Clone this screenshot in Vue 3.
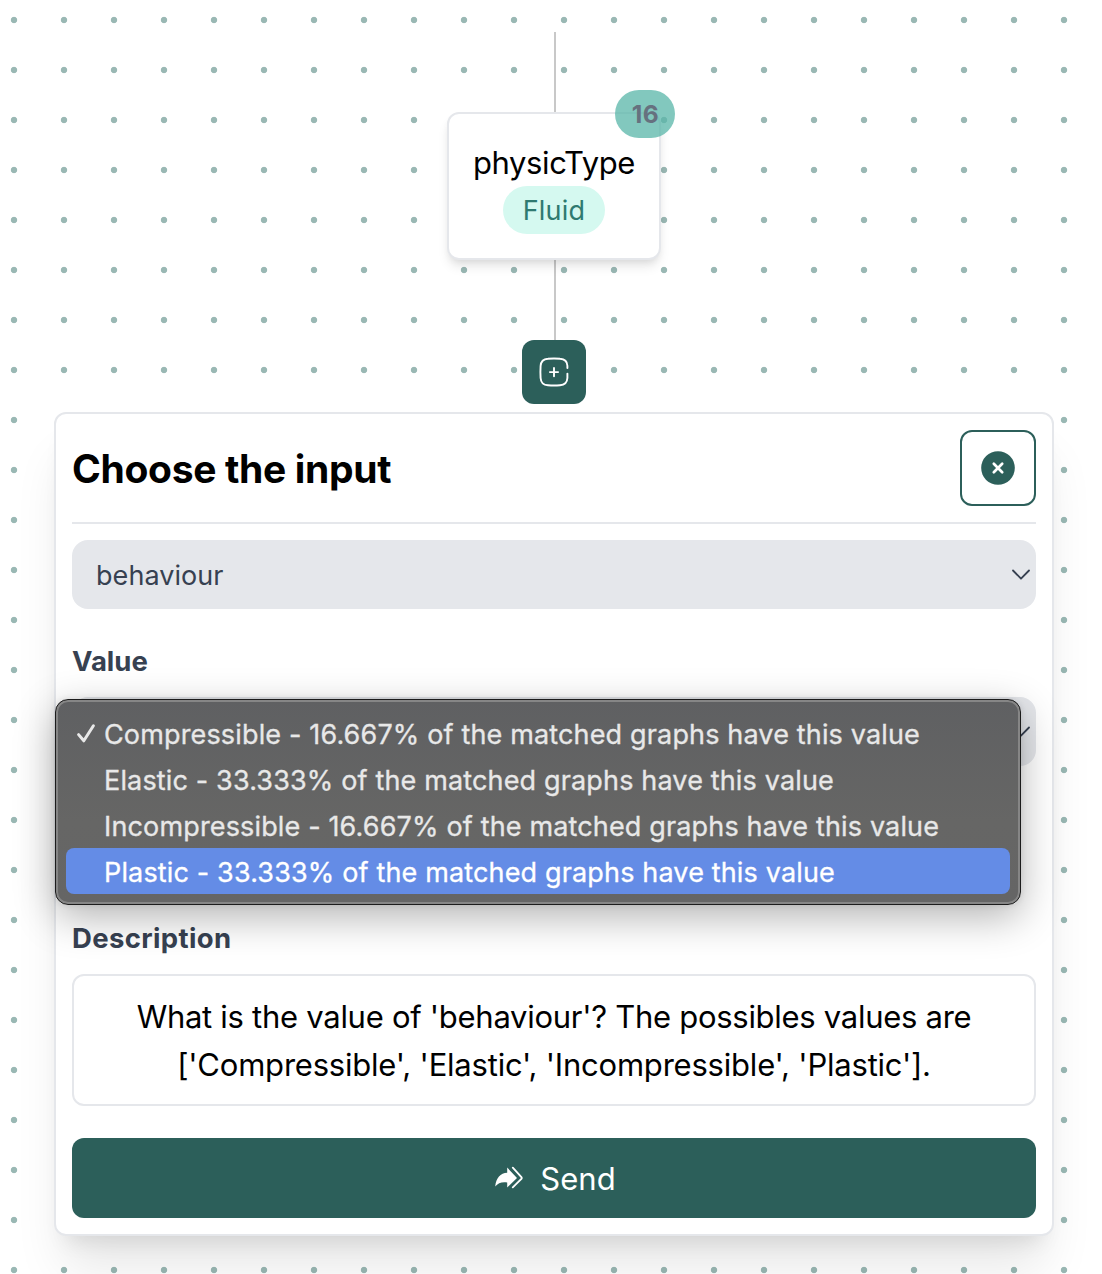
<script setup>
const options = [
  { text: 'Compressible - 16.667% of the matched graphs have this value', checked: true },
  { text: 'Elastic - 33.333% of the matched graphs have this value' },
  { text: 'Incompressible - 16.667% of the matched graphs have this value' },
  { text: 'Plastic - 33.333% of the matched graphs have this value', active: true },
]
</script>

<template>
  <main class="canvas">
    <div class="edge"></div>
    <div class="node">
      <span class="badge">16</span>
      <div class="node-title">physicType</div>
      <span class="pill">Fluid</span>
    </div>
    <div class="edge"></div>
    <button class="add" aria-label="Add">
      <svg width="32" height="32" viewBox="0 0 32 32" fill="none" stroke="#fff" stroke-width="1.9" stroke-linecap="round">
        <path d="M29.4 12V9.8C29.2 5 26.6 2.9 22 2.7Q16 2.2 10 2.7C5 3 2.9 5 2.6 10Q2.2 16 2.6 22C2.9 27 5 29 10 29.3Q16 29.8 22 29.3C27 29 29.1 27 29.4 22V17.6" />
        <path d="M16 12V20.2M11.9 16.1H20.1" />
      </svg>
    </button>

    <section class="panel">
      <header class="head">
        <h1>Choose the input</h1>
        <button class="close" aria-label="Close">
          <svg width="34" height="34" viewBox="0 0 34 34">
            <circle cx="17" cy="17" r="16.8" fill="#2c5f5a" />
            <path d="M12.8 12.8L21.2 21.2M21.2 12.8L12.8 21.2" stroke="#fff" stroke-width="2.7" stroke-linecap="round" />
          </svg>
        </button>
      </header>

      <div class="select">
        <span>behaviour</span>
        <svg class="chevron" width="18" height="12" viewBox="0 0 18 12"><path d="M1 1.5L9 9.7L17 1.5" /></svg>
      </div>

      <div class="label value-label">Value</div>
      <div class="select-wrap">
        <div class="select">
          <span></span>
          <svg class="chevron" width="18" height="12" viewBox="0 0 18 12"><path d="M1 1.5L9 9.7L17 1.5" /></svg>
        </div>
        <ul class="menu">
          <li v-for="o in options" :key="o.text" :class="{ active: o.active }">
            <svg v-if="o.checked" class="check" width="20" height="22" viewBox="0 0 20 22"><path d="M2.6 11.6L7.8 17.8L17.4 2.8" /></svg>
            <span>{{ o.text }}</span>
          </li>
        </ul>
      </div>

      <div class="label desc-label">Description</div>
      <div class="desc">
        <div class="line1">What is the value of 'behaviour'? The possibles values are</div>
        <div class="line2">['Compressible', 'Elastic', 'Incompressible', 'Plastic'].</div>
      </div>

      <button class="send">
        <svg width="28" height="24" viewBox="0 0 28 24">
          <path d="M0.2 20.6C1 12 5.5 7.2 12.2 6.8V1.6L22 12L12.2 21.6V16.4C7 15.6 3 16.8 0.2 20.6Z" fill="#fff" />
          <path d="M17.8 1.6L26.6 11.4Q27 12 26.6 12.6L17.8 21.4" fill="none" stroke="#fff" stroke-width="1.8" stroke-linecap="round" />
        </svg>
        <span>Send</span>
      </button>
    </section>
  </main>
</template>

<style>
body {
  margin: 0;
  overflow: hidden;
}
</style>

<style scoped>
* {
  box-sizing: border-box;
}
.canvas {
  display: flex;
  flex-direction: column;
  align-items: center;
  width: 1108px;
  height: 1274px;
  padding-top: 32px;
  overflow: hidden;
  font-family: Inter, "Liberation Sans", sans-serif;
  color: #000;
  background: #fff radial-gradient(circle at 25px 25px, #9ab8b4 2.8px, transparent 3.6px) -11px -5px / 50px 50px;
}
button {
  font-family: inherit;
  padding: 0;
  border: 0;
}
.edge {
  flex: none;
  width: 2px;
  height: 80px;
  margin-left: 2px;
  background: #c8c8c8;
}
.node {
  position: relative;
  flex: none;
  display: flex;
  flex-direction: column;
  align-items: center;
  width: 214px;
  height: 148px;
  padding-top: 24px;
  background: #fff;
  border: 2px solid #e5e7eb;
  border-radius: 12px;
  box-shadow: 0 8px 12px -2px rgba(0, 0, 0, 0.1), 0 4px 8px -4px rgba(0, 0, 0, 0.1);
}
.node-title {
  height: 48px;
  font-size: 31px;
  line-height: 50px;
  letter-spacing: -0.4px;
}
.pill {
  width: 102px;
  height: 48px;
  line-height: 50px;
  border-radius: 24px;
  text-align: center;
  font-size: 27px;
  letter-spacing: 0.2px;
  color: #2f7a70;
  background: #d5f9f0;
}
.badge {
  position: absolute;
  top: -24px;
  right: -16px;
  width: 60px;
  height: 48px;
  line-height: 49px;
  border-radius: 24px;
  text-align: center;
  font-size: 24.5px;
  font-weight: 700;
  letter-spacing: 0.6px;
  text-indent: 1px;
  color: #66717f;
  background: rgba(88, 182, 168, 0.75);
}
.add {
  flex: none;
  display: flex;
  align-items: center;
  justify-content: center;
  width: 64px;
  height: 64px;
  border-radius: 12px;
  background: #2c5f5a;
}
.panel {
  flex: none;
  width: 1000px;
  height: 824px;
  margin-top: 8px;
  padding: 16px;
  background: #fff;
  border: 2px solid #e5e7eb;
  border-radius: 12px;
  box-shadow: 0 40px 50px -10px rgba(0, 0, 0, 0.1), 0 16px 20px -12px rgba(0, 0, 0, 0.1);
}
.head {
  display: flex;
  align-items: center;
  justify-content: space-between;
  height: 94px;
  padding-bottom: 16px;
  border-bottom: 2px solid #e5e7eb;
}
h1 {
  margin: 0;
  font-size: 39px;
  font-weight: 700;
  letter-spacing: -0.33px;
}
.close {
  display: flex;
  align-items: center;
  justify-content: center;
  width: 76px;
  height: 76px;
  background: #fff;
  border: 2px solid #2c5f5a;
  border-radius: 12px;
}
.select {
  display: flex;
  align-items: center;
  justify-content: space-between;
  height: 69px;
  padding: 0 6px 0 24px;
  border-radius: 16px;
  font-size: 27px;
  letter-spacing: 0.06px;
  color: #374151;
  background: #e5e7eb;
}
.select span {
  padding-top: 2px;
}
.head + .select {
  margin-top: 16px;
}
.chevron path {
  fill: none;
  stroke: #374151;
  stroke-width: 1.8;
  stroke-linecap: round;
  stroke-linejoin: round;
}
.label {
  line-height: 40px;
  font-size: 27.5px;
  font-weight: 700;
  color: #374151;
}
.value-label {
  margin-top: 32px;
}
.select-wrap {
  position: relative;
  height: 69px;
  margin-top: 16px;
}
.menu {
  position: absolute;
  top: 2px;
  left: -17px;
  width: 966px;
  height: 206px;
  margin: 0;
  padding: 10px;
  list-style: none;
  border: 1px solid #1c1c1c;
  border-radius: 13px;
  background: linear-gradient(#5f6062, #666665 60%, #656565);
  box-shadow: inset 0 0 0 2px #868686, 0 12px 40px rgba(0, 0, 0, 0.3), 0 0 6px rgba(0, 0, 0, 0.1);
}
.menu li {
  position: relative;
  height: 46px;
  padding-left: 38px;
  line-height: 49px;
  border-radius: 8px;
  font-size: 27px;
  -webkit-text-stroke: 0.3px currentColor;
  letter-spacing: 0.15px;
  white-space: nowrap;
  color: #e8e8e8;
}
.menu li.active {
  color: #fff;
  background: #648ce6;
}
.check {
  position: absolute;
  left: 10px;
  top: 13px;
}
.check path {
  fill: none;
  stroke: #e8e8e8;
  stroke-width: 3;
  stroke-linecap: round;
  stroke-linejoin: round;
}
.desc-label {
  margin-top: 152px;
  letter-spacing: 0.36px;
}
.desc {
  height: 132px;
  margin-top: 16px;
  padding-top: 17px;
  border: 2px solid #e5e7eb;
  border-radius: 12px;
  text-align: center;
  font-size: 31px;
  line-height: 48px;
}
.line1 {
  letter-spacing: -0.28px;
}
.line2 {
  letter-spacing: -0.21px;
}
.send {
  display: flex;
  align-items: center;
  justify-content: center;
  gap: 17px;
  width: 100%;
  height: 80px;
  margin-top: 32px;
  padding-left: 3px;
  border-radius: 12px;
  font-size: 31px;
  color: #fff;
  background: #2c5f5a;
}
</style>
